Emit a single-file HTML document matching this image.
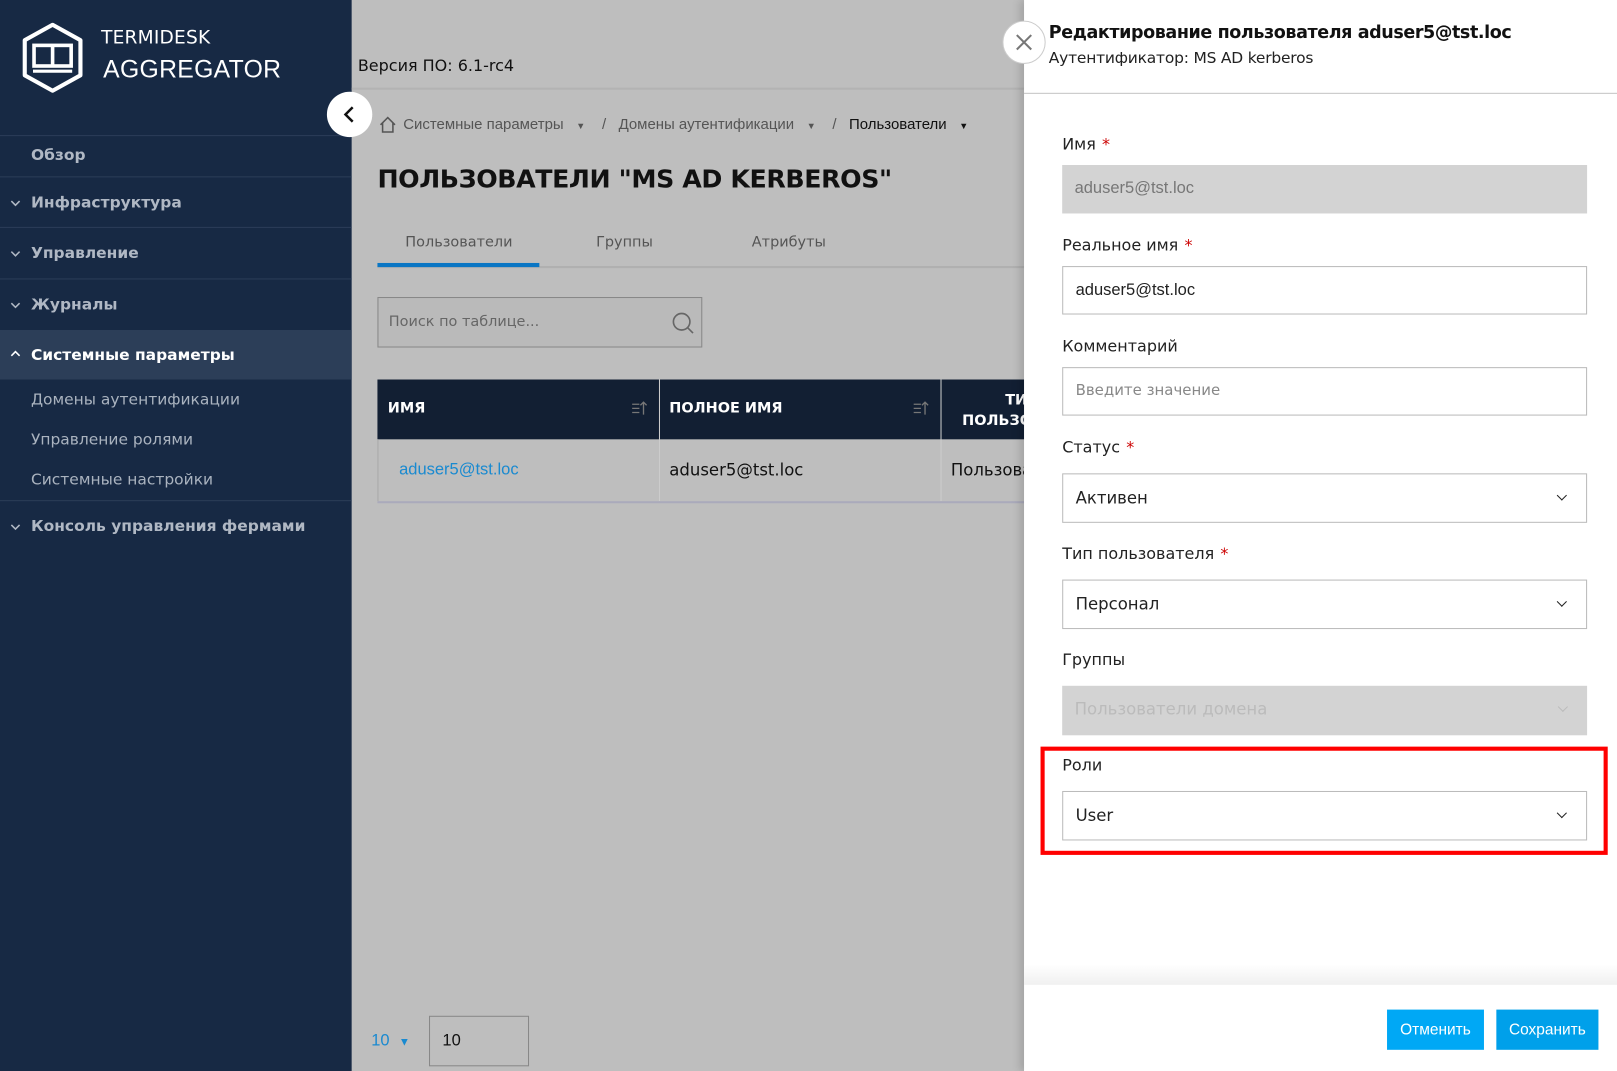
<!DOCTYPE html>
<html><head><meta charset="utf-8"><style>
html,body{margin:0;padding:0;width:1617px;height:1071px;overflow:hidden;background:#bfbfbf}
#w{position:absolute;left:0;top:0;width:1568px;height:1039px;transform:scale(1.03125);transform-origin:0 0;font-family:"Liberation Sans","DejaVu Sans",sans-serif;background:#bebebe}
.a{position:absolute}
#sb{left:0;top:0;width:341px;height:1039px;background:#172944}
.mi{position:absolute;left:0;width:341px;color:#b0b8c4;font-weight:bold;font-size:15px;font-family:"DejaVu Sans",sans-serif}
.line{position:absolute;left:0;width:341px;height:1px;background:#2b3d58}
.sub{position:absolute;left:30px;color:#aab3bf;font-size:15px;font-family:"DejaVu Sans",sans-serif}
.chev{position:absolute;left:10px;width:10px;height:10px}
.lbl{position:absolute;left:1030px;font-size:15.5px;color:#222;font-family:"DejaVu Sans",sans-serif}
.lbl b{color:#c00;font-weight:normal;margin-left:6px}
.inp{position:absolute;left:1030px;width:509px;height:47px;border:1px solid #bbb;background:#fff;box-sizing:border-box;padding-left:12px;line-height:45px;font-size:16px;color:#222}
.dd{font-family:"DejaVu Sans",sans-serif}
.dd:after{content:"";position:absolute;right:20px;top:17px;width:6px;height:6px;border-right:1.6px solid #222;border-bottom:1.6px solid #222;transform:rotate(45deg)}
</style></head><body><div id="w">
<div id="sb" class="a">
 <svg class="a" style="left:20px;top:22px" width="62" height="68" viewBox="0 0 62 68"><path d="M31 2 L58 17 L58 51 L31 66 L4 51 L4 17 Z" fill="none" stroke="#fff" stroke-width="4" stroke-linejoin="round"/><rect x="13" y="22" width="36" height="20" fill="none" stroke="#fff" stroke-width="3.5"/><line x1="31" y1="22" x2="31" y2="42" stroke="#fff" stroke-width="3.5"/><line x1="12" y1="47" x2="50" y2="47" stroke="#fff" stroke-width="3"/></svg>
 <div class="a" style="left:98px;top:26px;color:#fff;font-size:18px;letter-spacing:0.2px;font-family:'DejaVu Sans',sans-serif">TERMIDESK</div>
 <div class="a" style="left:100px;top:54px;color:#fff;font-size:24px;letter-spacing:0.3px">AGGREGATOR</div>
 <div class="line" style="top:131px"></div>
 <div class="mi" style="top:141px;padding-left:30px">Обзор</div>
 <div class="line" style="top:171px"></div>
 <svg class="chev" style="top:192px"><path d="M1 3 L5 7 L9 3" stroke="#b0b8c4" stroke-width="1.5" fill="none"/></svg><div class="mi" style="top:187px;padding-left:30px">Инфраструктура</div>
 <div class="line" style="top:220px"></div>
 <svg class="chev" style="top:241px"><path d="M1 3 L5 7 L9 3" stroke="#b0b8c4" stroke-width="1.5" fill="none"/></svg><div class="mi" style="top:236px;padding-left:30px">Управление</div>
 <div class="line" style="top:270px"></div>
 <svg class="chev" style="top:291px"><path d="M1 3 L5 7 L9 3" stroke="#b0b8c4" stroke-width="1.5" fill="none"/></svg><div class="mi" style="top:286px;padding-left:30px">Журналы</div>
 <div class="a" style="left:0;top:320px;width:341px;height:48px;background:#2c3e58"></div>
 <svg class="chev" style="top:338px"><path d="M1 7 L5 3 L9 7" stroke="#fff" stroke-width="1.5" fill="none"/></svg><div class="mi" style="top:335px;padding-left:30px;color:#fff">Системные параметры</div>
 <div class="sub" style="top:378px">Домены аутентификации</div>
 <div class="sub" style="top:417px">Управление ролями</div>
 <div class="sub" style="top:456px">Системные настройки</div>
 <div class="line" style="top:485px"></div>
 <svg class="chev" style="top:506px"><path d="M1 3 L5 7 L9 3" stroke="#b0b8c4" stroke-width="1.5" fill="none"/></svg><div class="mi" style="top:501px;padding-left:30px">Консоль управления фермами</div>
</div>
<div class="a" style="left:341px;top:85px;width:660px;height:2px;background:#b3b3b3"></div>
<div class="a" style="left:347px;top:55px;font-size:15.5px;color:#111;font-family:'DejaVu Sans',sans-serif">Версия ПО: 6.1-rc4</div>
<div class="a" style="left:317px;top:89px;width:44px;height:44px;border-radius:50%;background:#fff"></div>
<svg class="a" style="left:331px;top:102px" width="16" height="18"><path d="M11 2 L4 9 L11 16" stroke="#111" stroke-width="2.4" fill="none"/></svg>
<svg class="a" style="left:367px;top:112px" width="18" height="18"><path d="M2 9 L9 2 L16 9 M4 7 V16 H14 V7" stroke="#555" stroke-width="1.5" fill="none"/></svg>
<div class="a" style="left:391px;top:113px;font-size:14.5px;color:#555;white-space:nowrap">Системные параметры &nbsp;&nbsp;<span style="font-size:9px">&#9660;</span>&nbsp;&nbsp;&nbsp; / &nbsp;&nbsp;Домены аутентификации &nbsp;&nbsp;<span style="font-size:9px">&#9660;</span>&nbsp;&nbsp;&nbsp; / &nbsp;&nbsp;<span style="color:#111">Пользователи &nbsp;&nbsp;<span style="font-size:9px">&#9660;</span></span></div>
<div class="a" style="left:366px;top:159px;font-size:24.5px;font-weight:bold;color:#111;font-family:'DejaVu Sans',sans-serif;letter-spacing:-0.4px">ПОЛЬЗОВАТЕЛИ "MS AD KERBEROS"</div>
<div class="a" style="left:366px;top:258px;width:630px;height:2px;background:#b0b0b0"></div>
<div class="a" style="left:366px;top:255px;width:157px;height:4px;background:#0a76c4"></div>
<div class="a" style="left:393px;top:227px;font-size:14px;color:#555;font-family:'DejaVu Sans',sans-serif">Пользователи</div>
<div class="a" style="left:578px;top:227px;font-size:14px;color:#555;font-family:'DejaVu Sans',sans-serif">Группы</div>
<div class="a" style="left:729px;top:227px;font-size:14px;color:#555;font-family:'DejaVu Sans',sans-serif">Атрибуты</div>
<div class="a" style="left:366px;top:288px;height:47px;border:1px solid #888;background:#bababa;font-size:14px;color:#666;line-height:46px;padding-left:10px;box-sizing:content-box;width:303px;font-family:'DejaVu Sans',sans-serif">Поиск по таблице...</div>
<svg class="a" style="left:651px;top:302px" width="22" height="22"><circle cx="10" cy="10" r="8" stroke="#666" stroke-width="1.6" fill="none"/><path d="M16 16 L21 21" stroke="#666" stroke-width="1.6"/></svg>
<div class="a" style="left:366px;top:368px;width:630px;height:58px;background:#121f33"></div>
<div class="a" style="left:639px;top:368px;width:1px;height:118px;background:#ccc"></div>
<div class="a" style="left:912px;top:368px;width:1px;height:118px;background:#ccc"></div>
<div class="a" style="left:376px;top:388px;color:#fff;font-weight:bold;font-size:14px;font-family:'DejaVu Sans',sans-serif">ИМЯ</div>
<div class="a" style="left:649px;top:388px;color:#fff;font-weight:bold;font-size:14px;font-family:'DejaVu Sans',sans-serif">ПОЛНОЕ ИМЯ</div>
<svg class="a" style="left:612px;top:388px" width="16" height="16"><path d="M1 4 H8 M1 8 H8 M1 12 H8 M12 14 V2 M9 5 L12 2 L15 5" stroke="#777" stroke-width="1.3" fill="none"/></svg>
<svg class="a" style="left:885px;top:388px" width="16" height="16"><path d="M1 4 H8 M1 8 H8 M1 12 H8 M12 14 V2 M9 5 L12 2 L15 5" stroke="#777" stroke-width="1.3" fill="none"/></svg>
<div class="a" style="left:933px;top:378px;color:#fff;font-weight:bold;font-size:14px;text-align:right;width:63px;line-height:20px;overflow:hidden;font-family:'DejaVu Sans',sans-serif;white-space:nowrap">&nbsp;&nbsp;&nbsp;&nbsp;&nbsp;&nbsp;ТИ<br>ПОЛЬЗО</div>
<div class="a" style="left:366px;top:486px;width:630px;height:2px;background:#aab"></div>
<div class="a" style="left:366px;top:426px;width:1px;height:60px;background:#aaa"></div>
<div class="a" style="left:387px;top:447px;color:#1a8ad0;font-size:16px">aduser5@tst.loc</div>
<div class="a" style="left:649px;top:446px;color:#111;font-size:16px;font-family:'DejaVu Sans',sans-serif">aduser5@tst.loc</div>
<div class="a" style="left:922px;top:446px;color:#111;font-size:16px;width:71px;overflow:hidden;white-space:nowrap;font-family:'DejaVu Sans',sans-serif">Пользователь</div>
<div class="a" style="left:360px;top:1001px;color:#1a8ad0;font-size:16px">10 &nbsp;<span style="font-size:11px">&#9660;</span></div>
<div class="a" style="left:416px;top:985px;width:97px;height:49px;border:1px solid #888;box-sizing:border-box;padding-left:12px;line-height:47px;font-size:16px;color:#111">10</div>
<!-- panel -->
<div class="a" style="left:993px;top:0;width:575px;height:1039px;background:#fff;box-shadow:-4px 0 8px rgba(0,0,0,0.15)"></div>
<div class="a" style="left:993px;top:90px;width:575px;height:1px;background:#c4c4c4"></div>
<div class="a" style="left:993px;top:935px;width:575px;height:20px;background:linear-gradient(#fff,#f0f0f0)"></div>
<div class="a" style="left:972px;top:20px;width:40px;height:40px;border-radius:50%;background:#fff;border:1px solid #ccc"></div>
<svg class="a" style="left:983px;top:31px" width="20" height="20"><path d="M3 3 L17 17 M17 3 L3 17" stroke="#777" stroke-width="2"/></svg>
<div class="a" style="left:1017px;top:22px;font-size:17px;font-weight:bold;color:#111;font-family:'DejaVu Sans',sans-serif;letter-spacing:-0.4px">Редактирование пользователя aduser5@tst.loc</div>
<div class="a" style="left:1017px;top:47px;font-size:15px;color:#222;font-family:'DejaVu Sans',sans-serif;letter-spacing:-0.2px">Аутентификатор: MS AD kerberos</div>
<div class="lbl" style="top:131px">Имя<b>*</b></div>
<div class="inp" style="top:160px;background:#d3d3d3;border:none;color:#777">aduser5@tst.loc</div>
<div class="lbl" style="top:229px">Реальное имя<b>*</b></div>
<div class="inp" style="top:258px">aduser5@tst.loc</div>
<div class="lbl" style="top:327px">Комментарий</div>
<div class="inp" style="top:356px;color:#888;font-size:14.5px;font-family:'DejaVu Sans',sans-serif">Введите значение</div>
<div class="lbl" style="top:425px">Статус<b>*</b></div>
<div class="inp dd" style="top:459px;height:48px">Активен</div>
<div class="lbl" style="top:528px">Тип пользователя<b>*</b></div>
<div class="inp dd" style="top:562px;height:48px">Персонал</div>
<div class="lbl" style="top:631px">Группы</div>
<div class="inp dd gr" style="top:665px;height:48px;background:#d3d3d3;border:none;color:#bbb">Пользователи домена</div>
<style>.gr:after{border-color:#bbb !important}</style>
<div class="a" style="left:1009px;top:724px;width:550px;height:105px;border:4px solid #f00;box-sizing:border-box"></div>
<div class="lbl" style="top:733px">Роли</div>
<div class="inp dd" style="top:767px;height:48px">User</div>
<div class="a" style="left:1345px;top:979px;width:94px;height:39px;background:#00a8f5;color:#fff;font-size:15px;text-align:center;line-height:39px">Отменить</div>
<div class="a" style="left:1451px;top:979px;width:99px;height:39px;background:#00a0ea;color:#fff;font-size:15px;text-align:center;line-height:39px">Сохранить</div>
</div></body></html>
